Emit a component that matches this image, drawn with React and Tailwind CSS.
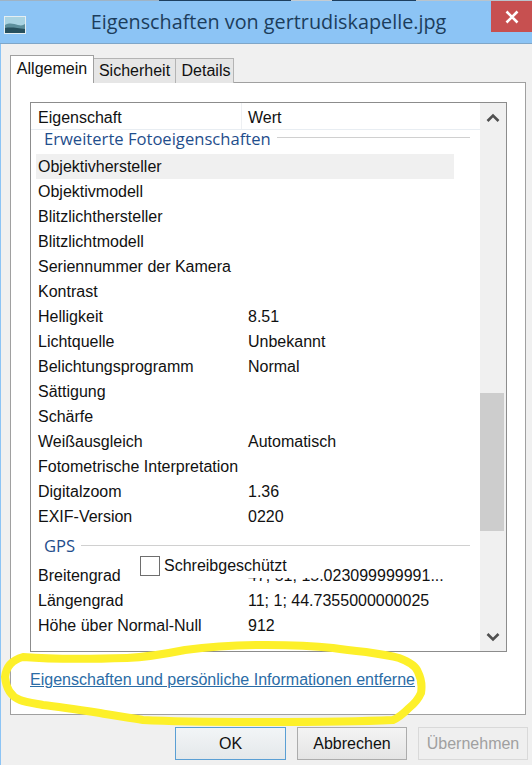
const rows = [
  ["Objektivhersteller", "", true],
  ["Objektivmodell", ""],
  ["Blitzlichthersteller", ""],
  ["Blitzlichtmodell", ""],
  ["Seriennummer der Kamera", ""],
  ["Kontrast", ""],
  ["Helligkeit", "8.51"],
  ["Lichtquelle", "Unbekannt"],
  ["Belichtungsprogramm", "Normal"],
  ["Sättigung", ""],
  ["Schärfe", ""],
  ["Weißausgleich", "Automatisch"],
  ["Fotometrische Interpretation", ""],
  ["Digitalzoom", "1.36"],
  ["EXIF-Version", "0220"],
];

const gpsRows = [
  ["Breitengrad", "47; 51; 15.023099999991..."],
  ["Längengrad", "11; 1; 44.7355000000025"],
  ["Höhe über Normal-Null", "912"],
];

const Row = ({ name, value, active }) => (
  <div className={`flex h-[25px] items-center ${active ? "bg-[#f0f0f0]" : ""}`}>
    <div className="w-[212px] pl-[2px] whitespace-nowrap">{name}</div>
    <div className="whitespace-nowrap">{value}</div>
  </div>
);

const GroupTitle = ({ children, className }) => (
  <div className={`flex items-center gap-[6px] pl-[13px] font-['Open_Sans',sans-serif] text-[16.6px] text-[#1f4e8c] ${className}`}>
    <span>{children}</span>
    <span className="mb-[3px] h-px flex-1 bg-[#d0d0d0]"></span>
  </div>
);

const App = () => {
  return (
    <div className="relative flex h-[765px] w-[532px] flex-col overflow-hidden bg-[#f0f0f0] font-['Liberation_Sans',sans-serif] text-[16px] text-[#111]">
      <div className="flex h-px shrink-0 bg-[#b9c4cc]">
        <div className="w-[159px] bg-[#9fb3c4]"></div>
        <div className="w-[132px] bg-[#1d3f5f]"></div>
        <div className="w-[41px] bg-[#c4ccd2]"></div>
        <div className="w-[84px] bg-[#1d3f5f]"></div>
      </div>

      <div className="relative flex h-[43px] shrink-0 items-center justify-center border-b border-[#7fa6c8] bg-[#8cc4f5] pl-[5px]">
        <svg className="absolute left-[4px] top-[15px]" width="22" height="18" viewBox="0 0 22 18">
          <rect width="22" height="18" fill="#e4eef2" />
          <rect x="1" y="1" width="20" height="16" fill="#a9d3e2" />
          <path d="M1 9 C6 6 10 8 14 9 S19 9 21 8 V17 H1 Z" fill="#5d8f9c" />
          <path d="M1 12 C7 11 13 12 21 13 V17 H1 Z" fill="#27505e" />
        </svg>
        <span className="font-['Open_Sans',sans-serif] text-[19.8px] text-[#1c3d5c]">
          Eigenschaften von gertrudiskapelle.jpg
        </span>
        <div className="absolute right-0 top-0 flex h-[31px] w-[41px] items-center justify-center bg-[#c75050]">
          <svg width="14" height="14" viewBox="0 0 14 14">
            <path d="M1.5 1.5 L12.5 12.5 M12.5 1.5 L1.5 12.5" stroke="#fff" strokeWidth="2.6" />
          </svg>
        </div>
      </div>

      <div className="flex flex-1 flex-col border-l border-[#8cc4f5] pl-[9px] pr-[6px] pt-[11px]">
        <div className="relative z-10 flex h-[28px] items-end">
          <div className="flex h-[28px] w-[84px] items-start justify-center border border-b-0 border-[#a0a0a0] bg-white pt-[1px]">
            Allgemein
          </div>
          <div className="flex h-[25px] w-[82px] items-center justify-center border border-b-0 border-l-0 border-[#b4b4b4] bg-[#e6e6e6]">
            Sicherheit
          </div>
          <div className="flex h-[25px] w-[58px] items-center justify-center border border-b-0 border-l-0 border-[#b4b4b4] bg-[#e6e6e6] pl-[3px]">
            Details
          </div>
        </div>

        <div className="-mt-px flex h-[633px] flex-col border border-[#a0a0a0] bg-white pl-[19px] pr-[18px] pt-[19px]">
          <div className="flex h-[550px] border border-[#8c8c8c]">
            <div className="min-w-0 flex-1">
              <div className="flex h-[27px] items-center border-b border-[#e8edf2]">
                <div className="w-[211px] border-r border-[#eef0f3] pl-[7px] pt-[3px] leading-[23px]">Eigenschaft</div>
                <div className="pl-[6px] pt-[3px]">Wert</div>
              </div>
              <GroupTitle className="h-[24px] pb-[6px] pr-[10px]">Erweiterte Fotoeigenschaften</GroupTitle>
              <div className="w-[423px] pl-[5px]">
                {rows.map(([name, value, active]) => (
                  <Row key={name} name={name} value={value} active={active} />
                ))}
              </div>
              <GroupTitle className="mt-[6px] h-[25px] pb-[2px] pr-[10px]">GPS</GroupTitle>
              <div className="mt-[3px] w-[423px] pl-[5px]">
                {gpsRows.map(([name, value]) => (
                  <Row key={name} name={name} value={value} />
                ))}
              </div>
            </div>

            <div className="flex w-[26px] shrink-0 flex-col bg-[#f0f0f0]">
              <div className="flex h-[30px] items-center justify-center">
                <svg width="14" height="10" viewBox="0 0 14 10">
                  <path d="M1.5 8 L7 2.5 L12.5 8" fill="none" stroke="#505050" strokeWidth="2.6" />
                </svg>
              </div>
              <div className="mt-[260px] h-[138px] w-[24px] bg-[#cdcdcd]"></div>
              <div className="mt-auto flex h-[28px] items-center justify-center">
                <svg width="14" height="10" viewBox="0 0 14 10">
                  <path d="M1.5 2 L7 7.5 L12.5 2" fill="none" stroke="#505050" strokeWidth="2.6" />
                </svg>
              </div>
            </div>
          </div>

          <div className="flex flex-1 items-start pt-[18px]">
            <a className="text-[16.05px] leading-[19px] text-[#2a6ca6] underline">
              Eigenschaften und persönliche Informationen entferne
            </a>
          </div>
        </div>

        <div className="flex flex-1 items-start justify-end gap-[11px] pt-[12px]">
          <button className="h-[33px] w-[111px] border border-[#5a9fd4] bg-linear-to-b from-[#f2f5f7] to-[#e4e8ea]">OK</button>
          <button className="h-[33px] w-[110px] border border-[#acacac] bg-linear-to-b from-[#f4f4f4] to-[#e4e4e4]">Abbrechen</button>
          <button className="-mr-[2px] h-[33px] w-[110px] border border-[#d9d9d9] bg-[#efefef] text-[#a0a0a0]">
            Übernehmen
          </button>
        </div>
      </div>

      {/* checkbox from the page below, painted over the list */}
      <div className="absolute left-[135px] top-[556px] flex h-[22px] w-[184px] items-start bg-white">
        <span className="ml-[5px] h-[20px] w-[20px] shrink-0 border border-[#6e6e6e] bg-white"></span>
        <span className="ml-[4px] whitespace-nowrap pt-[2px] leading-[16px]">Schreibgeschützt</span>
      </div>

      {/* yellow marker ring */}
      <svg className="pointer-events-none absolute left-0 top-0" width="532" height="765" viewBox="0 0 532 765">
        <path
          d="M23 657 C60 660 95 659 127 658 C150 657 165 654 185 650 C215 646 240 645 266 645 C290 645 315 646 333 648 C345 650 355 651 366 652 C380 654 392 656 399 658 C410 662 416 666 418 672 C422 680 422 687 421 693 C418 700 414 704 409 708 C403 714 398 718 393 720 C350 722 300 722 266 722 C220 722 180 722 143 720 C125 717 110 715 100 713 C80 710 60 707 43 705 C32 703 25 702 20 700 C10 696 6 688 5 677 C6 667 12 660 23 657 Z"
          fill="none"
          stroke="#fdf02a"
          strokeWidth="8"
          strokeLinejoin="round"
        />
      </svg>
    </div>
  );
};

export default App;
